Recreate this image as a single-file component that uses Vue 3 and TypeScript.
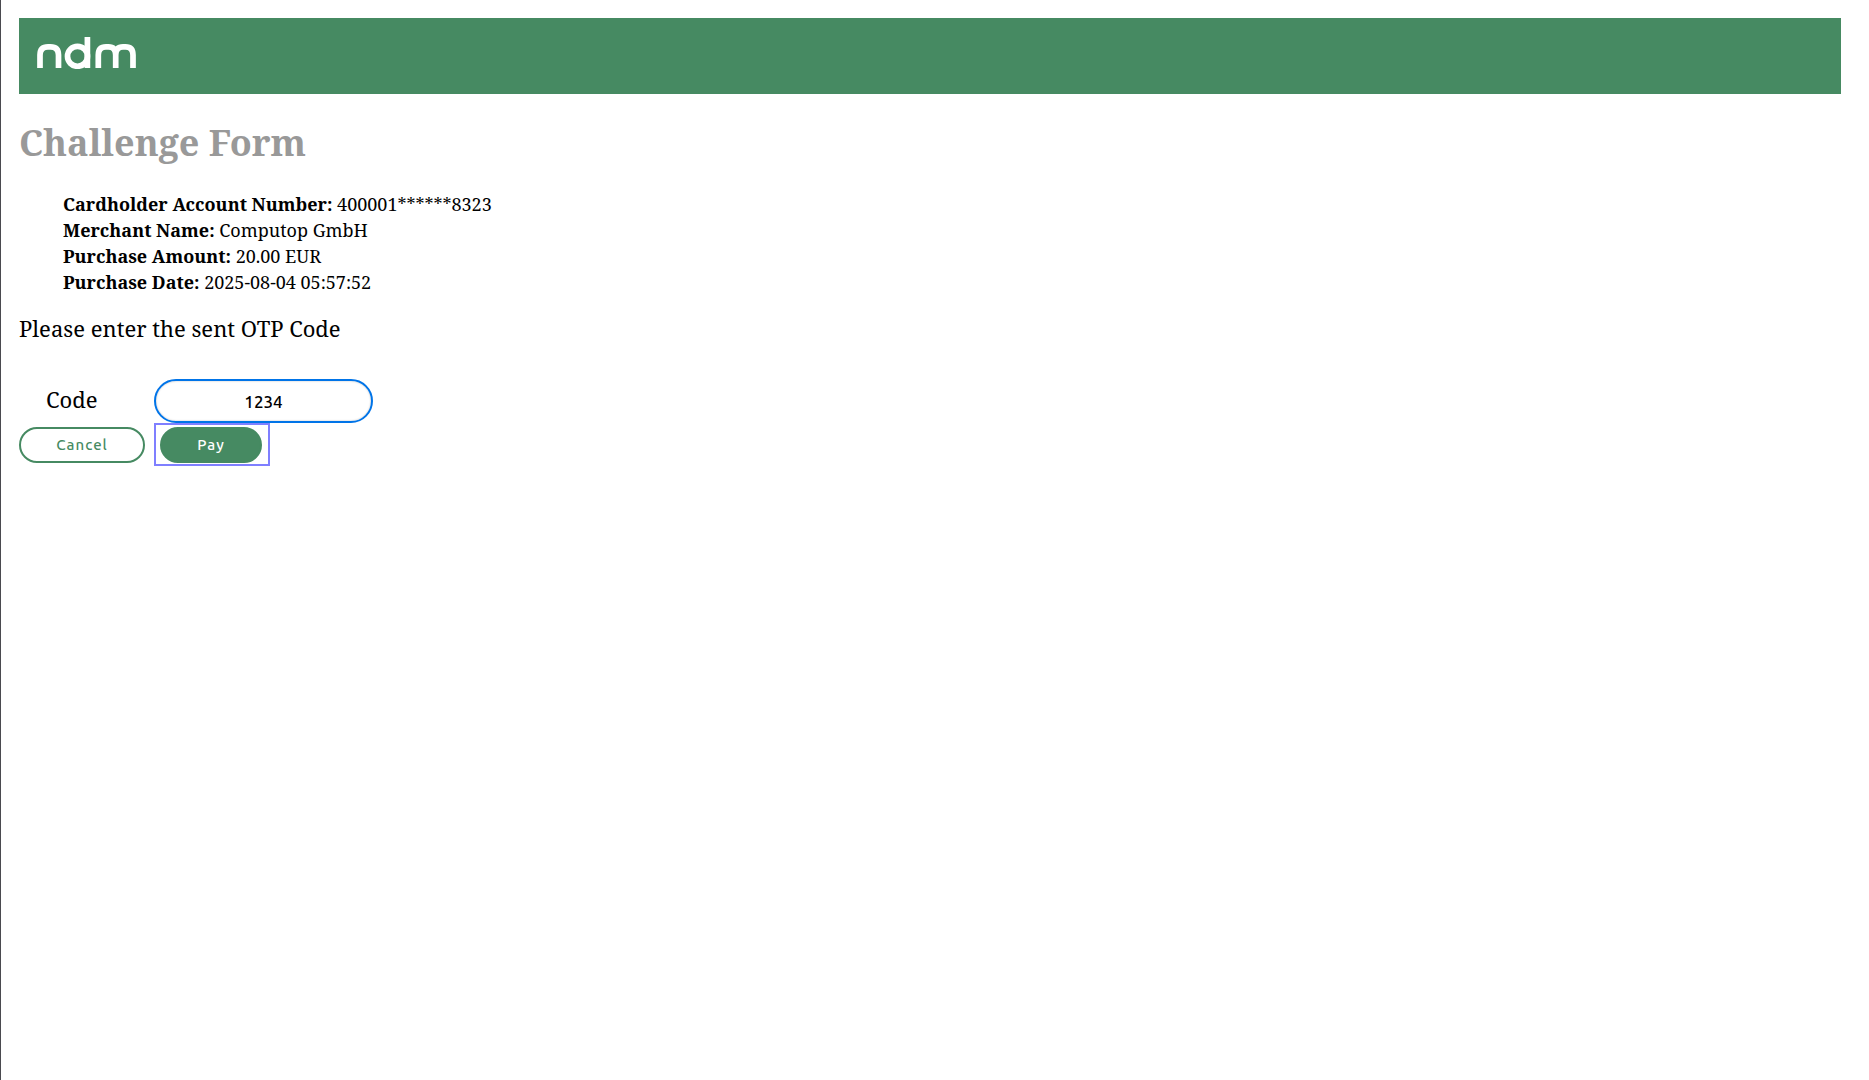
<script setup lang="ts">
import { ref } from 'vue'

interface Detail {
  label: string
  value: string
}

const details: Detail[] = [
  { label: 'Cardholder Account Number:', value: '400001******8323' },
  { label: 'Merchant Name:', value: 'Computop GmbH' },
  { label: 'Purchase Amount:', value: '20.00 EUR' },
  { label: 'Purchase Date:', value: '2025-08-04 05:57:52' },
]

const code = ref('1234')
</script>

<template>
  <main class="page">
    <header class="banner">
      <svg class="logo" width="100" height="32" viewBox="0 0 100 32" role="img" aria-label="ndm">
        <g fill="none" stroke="#fff" stroke-width="5.7">
          <path d="M3 31V18Q3 9.8 11 9.8H13.5Q21.5 9.8 21.5 18V31" />
          <circle cx="40.5" cy="19.3" r="10" />
          <path d="M50.4 0V31" />
          <path d="M61.3 31V18Q61.3 9.8 69 9.8H71.5Q78.7 9.8 78.7 18V31V18Q78.7 9.8 86 9.8H88.5Q96 9.8 96 18V31" />
        </g>
      </svg>
    </header>
    <h1>Challenge Form</h1>
    <ul class="details">
      <li v-for="d in details" :key="d.label"><b>{{ d.label }}</b> {{ d.value }}</li>
    </ul>
    <p class="prompt">Please enter the sent OTP Code</p>
    <form class="form" @submit.prevent>
      <label for="otp">Code</label>
      <input id="otp" v-model="code" type="text" autocomplete="off" />
      <button type="button" class="cancel">Cancel</button>
      <div class="frame"><button type="submit" class="pay">Pay</button></div>
    </form>
  </main>
</template>

<style>
body {
  margin: 0;
  background: #fff;
}
</style>

<style scoped>
.page {
  box-sizing: border-box;
  min-height: 100vh;
  padding: 18px 28px 18px 18px;
  border-left: 1px solid #4a4a4f;
  color: #000;
  font-family: "Noto Serif", "Droid Serif", "Liberation Serif", serif;
}
.banner {
  box-sizing: border-box;
  height: 76px;
  padding: 19px 18px;
  background: #468a62;
}
.logo {
  display: block;
}
h1 {
  margin: 24px 0 23px;
  color: #999;
  font-size: 36px;
  line-height: 50px;
}
.details {
  margin: 0;
  padding: 0 0 0 44px;
  list-style: none;
  font-size: 18px;
  line-height: 26px;
}
.prompt {
  margin: 17px 0 35px;
  font-size: 22px;
  line-height: 32px;
}
.form {
  display: grid;
  grid-template-columns: 126px 219px;
  column-gap: 9px;
  align-items: center;
}
label {
  padding: 0 0 4px 27px;
  font-size: 22px;
  line-height: 32px;
}
input,
button {
  box-sizing: border-box;
  border-radius: 22px;
  font-family: Ubuntu, "Noto Sans", sans-serif;
}
input {
  height: 44px;
  padding: 0 16px;
  border: 2px solid #0074e8;
  background: #fff;
  box-shadow: inset 0 0 2px #bbb;
  outline: none;
  font-size: 17px;
  font-weight: 500;
  text-align: center;
}
button {
  height: 36px;
  padding: 0;
  border: 2px solid #468a62;
  font-size: 15px;
  font-weight: 500;
  letter-spacing: 1px;
}
.cancel {
  background: #fff;
  color: #468a62;
}
.frame {
  box-sizing: border-box;
  display: flex;
  align-items: center;
  justify-self: start;
  width: 116px;
  height: 43px;
  padding-left: 4px;
  border: 2px solid #7f7fff;
}
.pay {
  width: 102px;
  background: #468a62;
  color: #fff;
}
</style>
